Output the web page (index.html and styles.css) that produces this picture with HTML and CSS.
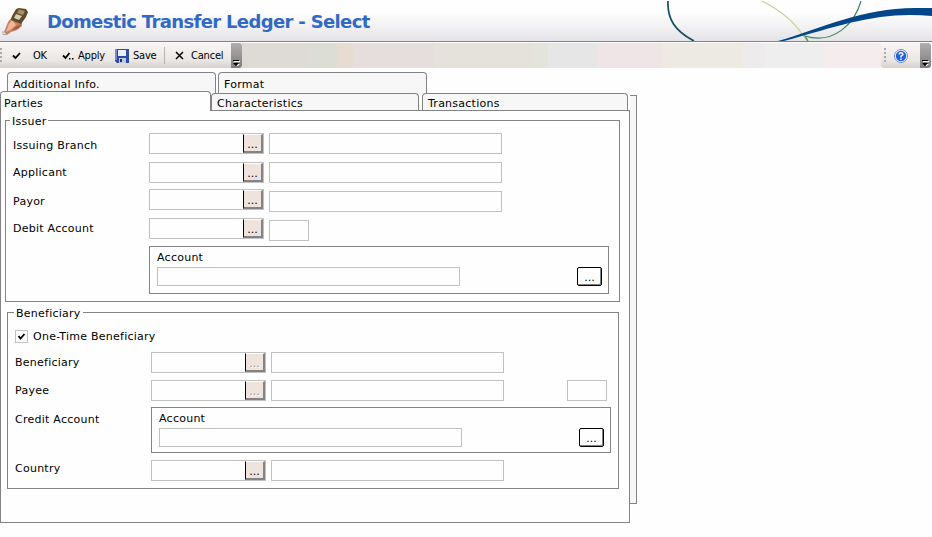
FILE: index.html
```html
<!DOCTYPE html>
<html lang="en">
<head>
<meta charset="utf-8">
<title>Domestic Transfer Ledger - Select</title>
<link rel="stylesheet" href="styles.css">
</head>
<body>
<header class="header">
  <svg class="logo" width="28" height="36" viewBox="0 0 28 36">
    <path d="M8 22 12 17 22 22 22 26 17 30 11 32 7 35 4 32Z" fill="#c98263"/>
    <path d="M9 24 12 20 16 25 10 30 6 32Z" fill="#ecb896"/>
    <path d="M15 27 21 24 19 28 12 31Z" fill="#a85a3c"/>
    <path d="M16 9 19 8 26 9 28 12 26 17 21 24 11 20 12 16Z" fill="#5e4a2c"/>
    <path d="M19 9.500 25 11 23 15 17 13Z" fill="#a99259"/>
    <path d="M16 14 22 16 19 20 14 18Z" fill="#d6cfb4"/>
    <path d="M3 31V34.500H7" fill="none" stroke="#aaa"/>
  </svg>
  <h1 class="title">Domestic Transfer Ledger - Select</h1>
  <svg class="swoosh" width="272" height="41" viewBox="0 0 272 41">
    <path d="M8 1C7 19 15 31 34 41" fill="none" stroke="#164c66" stroke-width="1.7"/>
    <path d="M102 1C122 11 134 22 142 34L147 41" fill="none" stroke="#c5d39b" stroke-width="1.3"/>
    <path d="M201 1C195 23 174 45 145 36L148 41" fill="none" stroke="#3c8a62" stroke-width="1.2"/>
    <path d="M118 41C160 29 202 8 255 8L272 8V16C220 11 185 24 124 41Z" fill="#03468a"/>
  </svg>
</header>
<div class="toolbar">
  <div class="tools">
    <span class="grip"></span>
    <span class="tool ok"><svg width="10" height="10" viewBox="0 0 10 10"><path d="M1 4.5 3.5 7 8 2" class="tick"/></svg>OK</span>
    <span class="tool apply"><svg width="12" height="10" viewBox="0 0 12 10"><path d="M1 4.5 3.5 7 7.5 2" class="tick"/><path d="M7 7h1.5v1.5H7zM10 7h1.5v1.5H10z"/></svg>Apply</span>
    <span class="tool save"><svg width="14" height="14" viewBox="0 0 14 14"><path d="M0 0h14v14H2L0 12Z" fill="#2d4aa5"/><path d="M0 0h2v11H0z" fill="#6f89d8"/><path d="M3 1h8v6H3z" fill="#e9effc"/><path d="M4 9h7v5H4z" fill="#bdc8e4"/><path d="M5 10h2v3H5z" fill="#1b2b63"/></svg>Save</span>
    <span class="divider"></span>
    <span class="tool cancel"><svg width="9" height="9" viewBox="0 0 9 9"><path d="M1 1 8 8M8 1 1 8" stroke="#000" stroke-width="1.5"/></svg>Cancel</span>
  </div>
  <span class="more"><svg width="7" height="7" viewBox="0 0 7 7"><path d="M1 2h6v1H1zM2 5h5L4.500 7z" fill="#fff"/><path d="M0 1h6v1H0zM0 4h6L3 7z"/></svg></span>
  <div class="strip"></div>
  <div class="tools help">
    <span class="grip"></span>
    <svg width="14" height="14" viewBox="0 0 14 14"><circle cx="7" cy="7" r="6.500" fill="#fff" stroke="#6e8cca"/><circle cx="7" cy="7" r="5.200" fill="#265fdb"/><path d="M5 5.500Q5.200 3.700 7 3.700T9 5.300Q9 6.200 7 7.200V8.500M7 9.500V11" fill="none" stroke="#fff" stroke-width="1.500"/></svg>
  </div>
  <span class="more"><svg width="7" height="7" viewBox="0 0 7 7"><path d="M1 2h6v1H1zM2 5h5L4.500 7z" fill="#fff"/><path d="M0 1h6v1H0zM0 4h6L3 7z"/></svg></span>
</div>
<main class="sheet">
  <nav class="tabs back"><span class="tab">Additional Info.</span><span class="tab">Format</span></nav>
  <nav class="tabs front"><span class="tab active">Parties</span><span class="tab chars">Characteristics</span><span class="tab trans">Transactions</span></nav>
  <div class="body">
    <div class="panel">
      <section class="group issuer">
        <h2 class="legend">Issuer</h2>
        <div class="row r29"><label class="low">Issuing Branch</label><div class="lookup"><button>...</button></div><div class="field"></div></div>
        <div class="row r27"><label>Applicant</label><div class="lookup"><button>...</button></div><div class="field"></div></div>
        <div class="row r29"><label class="low">Payor</label><div class="lookup"><button>...</button></div><div class="field drop"></div></div>
        <div class="row r28"><label>Debit Account</label><div class="lookup"><button>...</button></div><div class="field small drop"></div></div>
        <div class="account tall"><span>Account</span><div class="line"><div class="number"></div><button class="pick">...</button></div></div>
      </section>
      <section class="group beneficiary">
        <h2 class="legend">Beneficiary</h2>
        <div class="check"><span class="box"><svg width="9" height="9" viewBox="0 0 9 9"><path d="M1.500 4 3.500 6.500 7.500 2" class="tick"/></svg></span>One-Time Beneficiary</div>
        <div class="row r28"><label>Beneficiary</label><div class="lookup"><button disabled>...</button></div><div class="field"></div></div>
        <div class="row r27"><label>Payee</label><div class="lookup"><button disabled>...</button></div><div class="field"></div><div class="field small end"></div></div>
        <div class="credit"><label>Credit Account</label><div class="account"><span>Account</span><div class="line"><div class="number"></div><button class="pick">...</button></div></div></div>
        <div class="row r28"><label class="high">Country</label><div class="lookup"><button>...</button></div><div class="field"></div></div>
      </section>
    </div>
    <div class="edge"></div>
  </div>
</main>
</body>
</html>
```
FILE: styles.css
```css
* { box-sizing: border-box; }
body { margin: 0; width: 932px; height: 537px; overflow: hidden; background: #fefefe; color: #000; font: 11px "DejaVu Sans", Verdana, sans-serif; letter-spacing: .25px; }
svg { display: block; flex: none; }
button { font: inherit; letter-spacing: 0; margin: 0; padding: 0; color: #000; }
.tick { fill: none; stroke: #000; stroke-width: 1.8; }

.header { display: flex; height: 42px; border-bottom: 1px solid #848284; background: linear-gradient(#fefefe 0 30%, #e5e3e7); }
.title { margin: 0 auto 0 19px; font-size: 18px; line-height: 43px; letter-spacing: -.65px; color: #316ac5; white-space: nowrap; }

.toolbar { display: flex; width: 931px; height: 25px; margin-top: 1px; font-family: "DejaVu Sans Condensed", Tahoma, sans-serif; letter-spacing: -.2px; }
.tools { display: flex; align-items: center; width: 231px; background: linear-gradient(#f8f6f5, #eae6e3 70%, #d5d0cd); }
.grip { width: 2px; height: 15px; background: repeating-linear-gradient(#aaa 0 2px, transparent 2px 4px); }
.tool { display: flex; align-items: center; }
.ok { margin-left: 10px; gap: 11px; width: 50px; }
.apply { gap: 4px; width: 53px; }
.save { gap: 4px; width: 49px; }
.divider { width: 1px; height: 17px; background: #b5b2b5; }
.cancel { margin-left: 10px; gap: 7px; }
.more { display: flex; align-items: flex-end; justify-content: center; width: 11px; padding-bottom: 2px; border-radius: 0 3px 3px 0; background: linear-gradient(#b0aeae, #7d7b7b); }
.strip { flex: 1; background: linear-gradient(90deg, #dedbd6 0 68px, #dcded6 68px 95px, #e6dcd2 95px 111px, #e6dedd 111px 192px, #e5e2dc 192px 290px, #e4e5da 290px 306px, #e6e6e6 306px 355px, #efe5e6 355px 420px, #edeae4 420px 501px, #eeebed 501px 523px, #eeeeee 523px 582px, #f5eded 582px); }
.help { width: 39px; gap: 8px; padding-left: 3px; border-radius: 3px 0 0 3px; }

.sheet { display: flex; flex-direction: column; padding-top: 4px; }
.tabs { display: flex; }
.tab { border: 1px solid #848284; border-bottom: 0; border-radius: 4px 4px 0 0; background: #f7f7f7; padding-left: 5px; white-space: nowrap; }
.back { gap: 2px; padding-left: 7px; height: 19px; }
.back .tab { width: 209px; height: 22px; line-height: 24px; }
.front { align-items: flex-end; height: 19px; position: relative; }
.front .tab { height: 17px; line-height: 20px; width: 208px; }
.front .active { width: 211px; height: 20px; margin: 0 0 -1px; padding-left: 3px; line-height: 23px; background: #fefefe; }
.front .chars { margin-right: 3px; }
.front .trans { width: 206px; }
.body { display: flex; }
.panel { width: 630px; height: 413px; padding: 9px 0 0 5px; border: 1px solid #848284; background: #fefefe; }
.edge { width: 7px; height: 409px; margin-top: -15px; border: 1px solid #848284; border-left: 0; background: #f7f7f7; }

.group { position: relative; border: 1px solid #848284; padding-left: 7px; }
.issuer { width: 615px; height: 182px; margin-left: -1px; padding-top: 12px; }
.beneficiary { width: 612px; height: 177px; margin: 10px 0 0 1px; }
.legend { position: absolute; left: 4px; top: -7px; margin: 0; padding: 0 2px; background: #fefefe; font-size: 11px; font-weight: normal; line-height: 16px; }
.beneficiary .legend { left: 6px; }
.row { display: flex; align-items: flex-start; }
.r27 { height: 27px; } .r28 { height: 28px; } .r29 { height: 29px; }
label { width: 136px; line-height: 21px; white-space: nowrap; }
label.low { line-height: 26px; }
label.high { line-height: 17px; }
.lookup { display: flex; justify-content: flex-end; width: 115px; height: 21px; margin-right: 5px; border: 1px solid #c1c1c1; }
.lookup button { width: 20px; height: 19px; border: solid; border-width: 1px 2px 2px 1px; border-color: #fff #848284 #848284 #000; background: #efe3de; line-height: 20px; }
.lookup button:disabled { color: #9b9491; text-shadow: 1px 1px #fff; }
.field { width: 233px; height: 21px; border: 1px solid #c1c1c1; }
.small { width: 40px; }
.drop { margin-top: 2px; }
.end { margin-left: 63px; }
.account { width: 460px; height: 46px; padding: 3px 7px 0; border: 1px solid #848284; }
.account span { display: block; line-height: 16px; }
.line { display: flex; justify-content: space-between; margin-top: 1px; }
.number { width: 303px; height: 19px; border: 1px solid #c1c1c1; }
.pick { width: 25px; height: 19px; margin-right: -1px; border: 1px solid #000; border-radius: 2px; background: #fefefe; box-shadow: inset -1px -1px #848284; line-height: 19px; }
.tall { height: 48px; margin-left: 136px; }
.check { display: flex; align-items: center; height: 39px; padding-top: 7px; gap: 5px; }
.box { display: flex; align-items: center; justify-content: center; width: 13px; height: 13px; border: 1px solid #c1c1c1; }
.credit { display: flex; height: 53px; }
.credit label { line-height: 26px; }
```
